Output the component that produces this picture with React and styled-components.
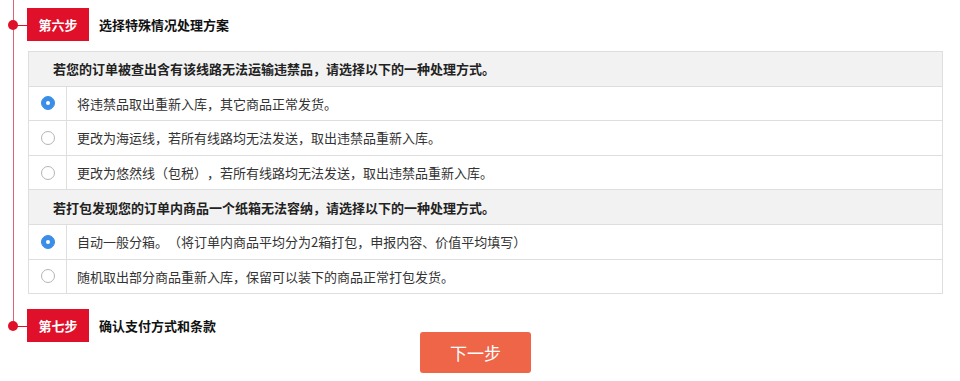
import React, { useState } from "react";
import styled, { createGlobalStyle } from "styled-components";

const Global = createGlobalStyle`
  html, body { margin: 0; padding: 0; background: #fff; }
  body {
    font-family: "Noto Sans CJK SC", "Microsoft YaHei", sans-serif;
    color: #333;
    text-spacing-trim: space-all;
  }
  * { box-sizing: border-box; }
`;

const LINE = "#dc6277";
const RED = "#e0102a";

const Page = styled.div`
  width: 960px;
  height: 381px;
  overflow: hidden;
`;

const Step = styled.section`
  position: relative;
  margin-left: 13px;
  padding-left: 13px;
  padding-top: ${(p) => (p.$last ? "0" : "8px")};
  padding-bottom: ${(p) => (p.$last ? "0" : "15px")};
  border-left: 1px solid ${(p) => (p.$last ? "transparent" : LINE)};
  &::before {
    content: "";
    display: ${(p) => (p.$last ? "block" : "none")};
    position: absolute;
    left: -1px;
    top: 0;
    width: 1px;
    height: 16px;
    background: ${LINE};
  }
`;

const StepHead = styled.div`
  position: relative;
  display: flex;
  align-items: center;
  gap: 10px;
  height: 33px;
  &::before {
    content: "";
    position: absolute;
    left: -19px;
    top: 50%;
    width: 10px;
    height: 10px;
    margin-top: -5px;
    border-radius: 50%;
    background: ${RED};
  }
  &::after {
    content: "";
    position: absolute;
    left: -12px;
    top: 50%;
    width: 12px;
    height: 1px;
    background: ${RED};
  }
`;

const Badge = styled.span`
  display: flex;
  align-items: center;
  justify-content: center;
  width: 62px;
  height: 33px;
  background: ${RED};
  color: #fff;
  font-size: 13px;
  font-weight: 700;
`;

const StepTitle = styled.span`
  font-size: 13px;
  font-weight: 700;
  color: #111;
`;

const Table = styled.div`
  margin-top: 10px;
  margin-left: 1px;
  width: 915px;
  border: 1px solid #dedede;
  border-bottom: none;
`;

const HeadRow = styled.div`
  display: flex;
  align-items: center;
  height: 34.6px;
  padding-left: 24px;
  background: #f2f2f2;
  border-bottom: 1px solid #dedede;
  font-size: 13px;
  font-weight: 700;
  color: #222;
`;

const OptionRow = styled.label`
  display: grid;
  grid-template-columns: 38px 1fr;
  height: 34.6px;
  border-bottom: 1px solid #dedede;
  cursor: pointer;
`;

const RadioCell = styled.div`
  display: flex;
  align-items: center;
  justify-content: center;
  border-right: 1px solid #dedede;
`;

const TextCell = styled.div`
  display: flex;
  align-items: center;
  padding-left: 10px;
  font-size: 13px;
  color: #333;
`;

const Radio = styled.span`
  width: 14px;
  height: 14px;
  border-radius: 50%;
  display: flex;
  align-items: center;
  justify-content: center;
  background: ${(p) => (p.$checked ? "#3b8ee8" : "#fff")};
  border: 1px solid ${(p) => (p.$checked ? "#3b8ee8" : "#b5b5b5")};
  &::after {
    content: "";
    display: ${(p) => (p.$checked ? "block" : "none")};
    width: 4px;
    height: 4px;
    border-radius: 50%;
    background: #fff;
  }
`;

const ButtonBar = styled.div`
  width: 951px;
  display: flex;
  justify-content: center;
  margin-top: -10px;
`;

const NextButton = styled.button`
  width: 111px;
  height: 41px;
  border: none;
  border-radius: 3px;
  background: #ee6548;
  color: #fff;
  font-family: "Noto Sans CJK SC", sans-serif;
  font-size: 17px;
  cursor: pointer;
`;

const groups = [
  {
    title: "若您的订单被查出含有该线路无法运输违禁品，请选择以下的一种处理方式。",
    options: [
      "将违禁品取出重新入库，其它商品正常发货。",
      "更改为海运线，若所有线路均无法发送，取出违禁品重新入库。",
      "更改为悠然线（包税），若所有线路均无法发送，取出违禁品重新入库。",
    ],
  },
  {
    title: "若打包发现您的订单内商品一个纸箱无法容纳，请选择以下的一种处理方式。",
    options: [
      "自动一般分箱。（将订单内商品平均分为2箱打包，申报内容、价值平均填写）",
      "随机取出部分商品重新入库，保留可以装下的商品正常打包发货。",
    ],
  },
];

export default function App() {
  const [sel, setSel] = useState([0, 0]);
  return (
    <Page>
      <Global />
      <Step>
        <StepHead>
          <Badge>第六步</Badge>
          <StepTitle>选择特殊情况处理方案</StepTitle>
        </StepHead>
        <Table>
          {groups.map((g, gi) => (
            <React.Fragment key={gi}>
              <HeadRow>{g.title}</HeadRow>
              {g.options.map((o, oi) => (
                <OptionRow
                  key={oi}
                  onClick={() => setSel((s) => s.map((v, i) => (i === gi ? oi : v)))}
                >
                  <RadioCell>
                    <Radio $checked={sel[gi] === oi} />
                  </RadioCell>
                  <TextCell>{o}</TextCell>
                </OptionRow>
              ))}
            </React.Fragment>
          ))}
        </Table>
      </Step>
      <Step $last>
        <StepHead>
          <Badge>第七步</Badge>
          <StepTitle>确认支付方式和条款</StepTitle>
        </StepHead>
      </Step>
      <ButtonBar>
        <NextButton>下一步</NextButton>
      </ButtonBar>
    </Page>
  );
}
